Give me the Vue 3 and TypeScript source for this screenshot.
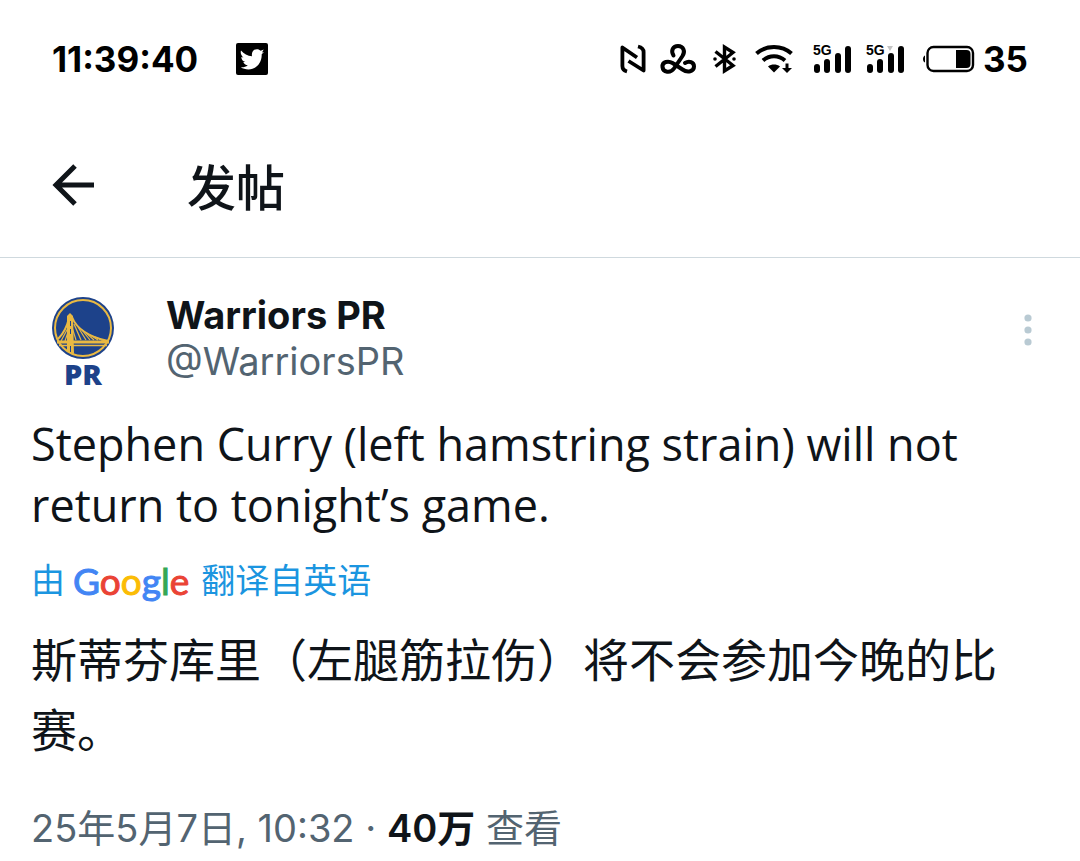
<script setup lang="ts">
interface Bar {
  x: number
  top: number
}

const bars: Bar[] = [
  { x: 3, top: 22 },
  { x: 13, top: 17 },
  { x: 24, top: 11 },
  { x: 34, top: 4 },
]

const brand = [
  { letter: 'G', tone: 'blue' },
  { letter: 'o', tone: 'red' },
  { letter: 'o', tone: 'yellow' },
  { letter: 'g', tone: 'blue' },
  { letter: 'l', tone: 'green' },
  { letter: 'e', tone: 'red' },
]

const cables = [
  [17, 36, 14, 45], [17, 32, 10, 45], [20, 28, 25, 44], [23, 28, 30, 44],
  [27, 31, 35, 44], [31, 34, 39, 44], [35, 37, 43, 44], [39, 39, 47, 44],
  [44, 41, 51, 44], [48, 43, 54, 45],
]
</script>

<template>
  <div class="page">
    <header class="status">
      <div class="side">
        <time class="clock">11:39:40</time>
        <svg class="bird" viewBox="0 0 32 32" width="32" height="32" aria-hidden="true">
          <rect width="32" height="32" rx="2" />
          <path fill="#fff" d="M5 7.500c2.900 3.500 6.500 5.400 11 5.700-.8-4 1.500-7 5-7 1.500 0 2.700.6 3.700 1.600l3-1.200-1.700 2.800 2-.5-2.300 2.400C26 20 20 26.400 12.500 26.400c-3 0-5.700-.8-7.700-2.200 2.800.2 5-.5 7-2-2.300-.2-3.800-1.400-4.500-3.300h2c-2.500-.8-3.900-2.500-4-5l2.200.6C5.200 12.700 4.200 10 5 7.500z" />
        </svg>
      </div>
      <div class="side icons">
        <svg class="nfc" viewBox="0 0 28 30" width="28" height="30" fill="none" stroke="#000" stroke-width="3.800" stroke-linejoin="round" aria-hidden="true">
          <path d="M8 27.500C4.500 26.500 3.400 25 3.400 22V3.500L18 13.500M19 2.500c4 1 5.600 2.500 5.600 5.500v18.500L9.500 17" />
        </svg>
        <svg class="loop" viewBox="0 0 36 32" width="36" height="32" fill="none" stroke="#000" stroke-width="4" stroke-linecap="round" stroke-linejoin="round" aria-hidden="true">
          <path d="M13.500 12.500C10.500 7.500 13 3 18 3c5.500 0 7.500 5.500 4.500 10L14 25.500C10.500 30.500 3 29.500 2.500 24S8.500 17.500 12.500 20l10 6.500c5 3.500 11.500 2 11.500-3 0-4.500-5-6-9-3.500" />
        </svg>
        <svg class="bluetooth" viewBox="0 0 24 32" width="24" height="32" fill="none" stroke="#000" stroke-width="3.400" aria-hidden="true">
          <path d="M2.500 8.500 20 22.500l-8.500 5.500V4L20 9.500 2.500 23.500" />
          <circle cx="2" cy="16" r="1.800" fill="#000" stroke="none" />
          <circle cx="21" cy="16" r="1.800" fill="#000" stroke="none" />
        </svg>
        <svg class="wifi" viewBox="0 0 38 30" width="38" height="30" fill="none" stroke="#000" stroke-width="4" aria-hidden="true">
          <path d="M1.500 9.500C11 .8 27 .8 36.500 9.500M8 16.500c6.500-5.600 15.500-5.600 22 0" />
          <path fill="#000" stroke="none" d="M13 22.500c3.500-2.600 8.500-2.600 12 0l-6 6z" />
          <path stroke-width="3" d="M32 19.500v6" />
          <path fill="#000" stroke="none" d="M27 24h10l-5 5z" />
        </svg>
        <span v-for="sim in 2" :key="sim" class="signal">
          <span class="generation">5G</span>
          <svg viewBox="0 0 40 32" width="40" height="32" aria-hidden="true">
            <path v-if="sim === 2" fill="#c4c4c4" d="M21 3h6l-3 5z" />
            <path v-for="bar in bars" :key="bar.x" :d="`M${bar.x + 1} ${bar.top + 2}V27`" stroke="#000" stroke-width="6" stroke-linecap="round" />
          </svg>
        </span>
        <svg class="battery" viewBox="0 0 54 28" width="54" height="28" aria-hidden="true">
          <path d="M3 10.500v7C.3 16.500.3 11.500 3 10.500z" />
          <rect x="5.500" y="2" width="45.500" height="24" rx="6" fill="none" stroke="#000" stroke-width="2.400" />
          <path d="M34 5h10.500q4 0 4 4v10q0 4-4 4H34z" />
        </svg>
        <span class="charge">35</span>
      </div>
    </header>

    <nav class="topbar">
      <button class="back" type="button" aria-label="返回">
        <svg viewBox="0 0 44 42" width="44" height="42" fill="none" stroke="#0f1419" stroke-width="5" aria-hidden="true">
          <path d="M24 2 5 21l19 19M4 21h39" />
        </svg>
      </button>
      <h1>发帖</h1>
    </nav>

    <article class="post">
      <div class="author">
        <div class="avatar">
          <svg viewBox="0 0 64 64" width="64" height="64" aria-hidden="true">
            <circle cx="32" cy="32" r="31" fill="#1d428a" />
            <circle cx="32" cy="32" r="28" fill="none" stroke="#e9b943" stroke-width="2" />
            <g stroke="#e9b943" fill="none">
              <path stroke-width="3" d="M6 46h52" />
              <path stroke-width="1.500" d="M8 49.500h48" />
              <path stroke-width="2" d="M18 22c-2 9-5 15-11 21M21 21c5 13 18 20 36 24" />
              <path v-for="(c, i) in cables" :key="i" stroke-width="1.200" :d="`M${c[0]} ${c[1]}L${c[2]} ${c[3]}`" />
            </g>
            <path fill="#e9b943" d="M16 20l3-3 3 3 1 38-7-3z" />
            <path stroke="#1d428a" stroke-width="1" d="M19.500 25v5M19.500 33v5M19.500 50v6" />
          </svg>
          <span>PR</span>
        </div>
        <div class="names">
          <strong>Warriors PR</strong>
          <span>@WarriorsPR</span>
        </div>
        <button class="more" type="button" aria-label="更多">
          <svg viewBox="0 0 8 32" width="8" height="32" fill="#b9cad3" aria-hidden="true">
            <circle cx="4" cy="4" r="3.600" /><circle cx="4" cy="16" r="3.600" /><circle cx="4" cy="28" r="3.600" />
          </svg>
        </button>
      </div>
      <p class="original" lang="en">Stephen Curry (left hamstring strain) will not return to tonight’s game.</p>
      <p class="source">
        <span>由</span>
        <span class="google"><span v-for="(part, i) in brand" :key="i" :class="part.tone">{{ part.letter }}</span></span>
        <span>翻译自英语</span>
      </p>
      <p class="translated">斯蒂芬库里（左腿筋拉伤）将不会参加今晚的比赛。</p>
      <p class="meta">25年5月7日, 10:32 · <strong>40万</strong> 查看</p>
    </article>
  </div>
</template>

<style>
body {
  margin: 0;
  background: #fff;
}
</style>

<style scoped>
.page {
  color: #0f1419;
  font-family: Inter, "Noto Sans CJK SC", sans-serif;
}

p,
h1 {
  margin: 0;
}

svg {
  display: block;
}

button {
  padding: 0;
  border: 0;
  background: none;
  cursor: pointer;
}

.status {
  display: flex;
  justify-content: space-between;
  height: 118px;
  padding: 0 52px;
  box-sizing: border-box;
  color: #000;
  font: 700 35px Inter, sans-serif;
}

.side {
  display: flex;
  align-items: center;
  gap: 38px;
}

.icons {
  gap: 13px;
}

.bluetooth {
  margin-left: 4px;
}

.wifi {
  margin: 0 7px 0 5px;
}

.signal {
  position: relative;
}

.generation {
  position: absolute;
  top: -1px;
  left: 0;
  font: 700 14px/16px "Liberation Sans", sans-serif;
}

.battery {
  margin-left: 3px;
}

.charge {
  margin-left: -6px;
}

.topbar {
  display: flex;
  align-items: center;
  gap: 92px;
  height: 140px;
  padding: 0 51px;
  border-bottom: 1px solid #cfd9de;
  box-sizing: border-box;
}

.back svg {
  margin-bottom: 6px;
}

h1 {
  padding-top: 2px;
  font-size: 49px;
  font-weight: 500;
  line-height: 60px;
}

.post {
  padding: 34px 31px 0;
}

.author {
  display: flex;
  align-items: flex-start;
}

.avatar {
  display: flex;
  flex-direction: column;
  align-items: center;
  width: 104px;
  padding-top: 4px;
}

.avatar span {
  color: #1d428a;
  font: 800 29px/28px "Open Sans", sans-serif;
}

.names {
  display: flex;
  flex: 1;
  flex-direction: column;
  margin-left: 31px;
  font-size: 38px;
  line-height: 46px;
}

.names span {
  color: #536471;
}

.more {
  padding: 22px 17px 0 0;
}

.original {
  margin-top: 25px;
  font-family: "Open Sans", sans-serif;
  font-size: 45px;
  line-height: 61px;
}

.source {
  display: flex;
  align-items: center;
  gap: 8px;
  margin-top: 21px;
  color: #1b95e0;
  font-size: 34px;
  line-height: 50px;
}

.google {
  margin-right: 4px;
  font-family: Lato, sans-serif;
  font-size: 37px;
  -webkit-text-stroke: 1px;
}

.blue {
  color: #4285f4;
}

.red {
  color: #ea4335;
}

.yellow {
  color: #fbbc05;
}

.green {
  color: #34a853;
}

.translated {
  margin-top: 19px;
  font-size: 46px;
  line-height: 70px;
}

.meta {
  margin-top: 35px;
  color: #536471;
  font-size: 38px;
  line-height: 56px;
}

.meta strong {
  color: #0f1419;
  font-weight: 600;
}
</style>
